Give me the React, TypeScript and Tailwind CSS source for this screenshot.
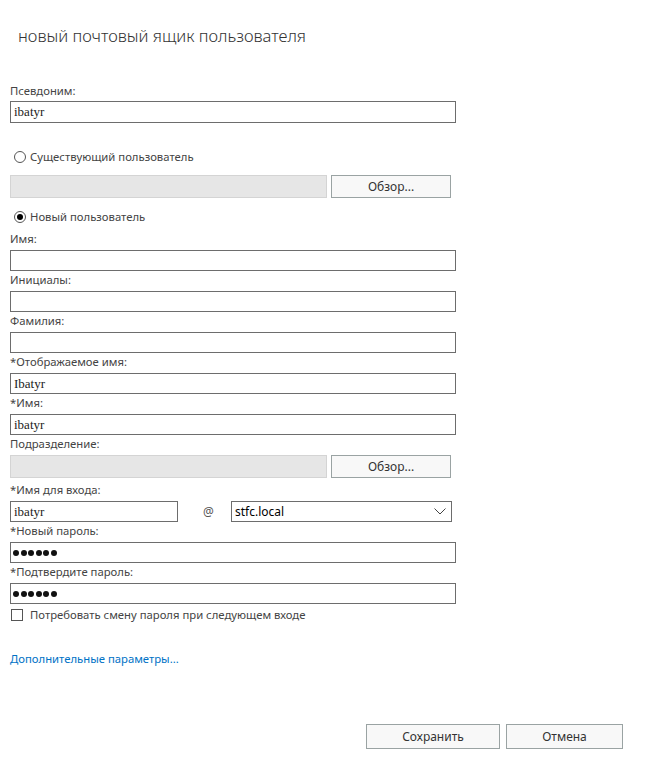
import React from 'react';

const labelCls = "h-[18px] leading-[18px] text-[11.3px] text-[#444]";
const inputCls =
  "block w-[446px] h-[21px] border border-[#6d6d6d] bg-white px-[3px] text-[13px] text-[#222] outline-none";

const Field = ({ label, value = '' }: { label: string; value?: string }) => (
  <div>
    <div className={labelCls}>{label}</div>
    <input
      readOnly
      defaultValue={value}
      className={inputCls + ' mt-[2px]'}
      style={{ fontFamily: '"Liberation Serif", serif' }}
    />
  </div>
);

const Dots = () => (
  <div className="flex gap-[1.6px] items-center">
    {[0, 1, 2, 3, 4, 5].map((i) => (
      <span key={i} className="w-[6px] h-[6px] rounded-full bg-[#111]" />
    ))}
  </div>
);

const PasswordField = ({ label }: { label: string }) => (
  <div>
    <div className={labelCls}>{label}</div>
    <div className="mt-[2px] w-[446px] h-[21px] border border-[#6d6d6d] bg-white flex items-center pl-[2px]">
      <Dots />
    </div>
  </div>
);

const BrowseRow = ({ className = '' }: { className?: string }) => (
  <div className={'flex items-center ' + className}>
    <div className="w-[317px] h-[23px] bg-[#e6e6e6] border border-[#d4d4d4]" />
    <button className="ml-[4px] w-[120px] h-[23px] border border-[#9aa3a3] bg-[#f8f8f8] text-[12px] text-[#333]">
      Обзор...
    </button>
  </div>
);

const Radio = ({ checked, label, className = '' }: { checked: boolean; label: string; className?: string }) => (
  <div className={'flex items-center h-[18px] ' + className}>
    <span className="ml-[4px] w-[12px] h-[12px] rounded-full border border-[#555] bg-white flex items-center justify-center">
      {checked && <span className="w-[6px] h-[6px] rounded-full bg-black" />}
    </span>
    <span className="ml-[4px] text-[11.3px] text-[#444]">{label}</span>
  </div>
);

export default function App() {
  return (
    <div
      className="w-[654px] h-[778px] bg-white px-[10px]"
      style={{ fontFamily: '"Noto Sans", "Open Sans", sans-serif' }}
    >
      <div className="pt-[25px] pl-[8px] h-[48px] text-[16.6px] font-light text-[#333] leading-[22px]">
        новый почтовый ящик пользователя
      </div>

      <div className="mt-[34px]">
        <div className={labelCls}>Псевдоним:</div>
        <input
          readOnly
          defaultValue="ibatyr"
          className={inputCls + ' mt-[1px] h-[22px]'}
          style={{ fontFamily: '"Liberation Serif", serif' }}
        />
      </div>

      <Radio checked={false} label="Существующий пользователь" className="mt-[25px]" />
      <BrowseRow className="mt-[9px]" />
      <Radio checked label="Новый пользователь" className="mt-[10px]" />

      <div className="mt-[4px]">
        <Field label="Имя:" />
        <Field label="Инициалы:" />
        <Field label="Фамилия:" />
        <Field label="*Отображаемое имя:" value="Ibatyr" />
        <Field label="*Имя:" value="ibatyr" />
      </div>

      <div className={labelCls}>Подразделение:</div>
      <BrowseRow className="mt-[2px]" />

      <div className={labelCls + ' mt-[3px]'}>*Имя для входа:</div>
      <div className="mt-[2px] flex items-center h-[21px]">
        <input
          readOnly
          defaultValue="ibatyr"
          className="block w-[168px] h-[21px] border border-[#6d6d6d] bg-white px-[3px] text-[13px] text-[#222] outline-none"
          style={{ fontFamily: '"Liberation Serif", serif' }}
        />
        <span className="ml-[25px] w-[13px] text-[12px] text-[#555]">@</span>
        <div className="ml-[15px] w-[221px] h-[21px] border border-[#6d6d6d] bg-white flex items-center justify-between pl-[3px] pr-[5px]">
          <span className="text-[12px] text-black">stfc.local</span>
          <svg width="12" height="7" viewBox="0 0 12 7" fill="none">
            <path d="M0.5 0.5 L6 6 L11.5 0.5" stroke="#444" strokeWidth="1" />
          </svg>
        </div>
      </div>

      <PasswordField label="*Новый пароль:" />
      <PasswordField label="*Подтвердите пароль:" />

      <div className="mt-[5px] flex items-center h-[12px]">
        <span className="ml-[1px] w-[12px] h-[12px] border border-[#555] bg-white" />
        <span className="ml-[7px] text-[11.3px] text-[#444]">Потребовать смену пароля при следующем входе</span>
      </div>

      <div className="mt-[29px] text-[11.3px] text-[#0072c6] h-[18px] leading-[18px]">Дополнительные параметры...</div>

      <div className="mt-[56px] flex justify-end pr-[21px] gap-[6px]">
        <button className="w-[134px] h-[25px] border border-[#9aa3a3] bg-[#f8f8f8] text-[12px] text-[#333]">
          Сохранить
        </button>
        <button className="w-[117px] h-[25px] border border-[#9aa3a3] bg-[#f8f8f8] text-[12px] text-[#333]">
          Отмена
        </button>
      </div>
    </div>
  );
}
